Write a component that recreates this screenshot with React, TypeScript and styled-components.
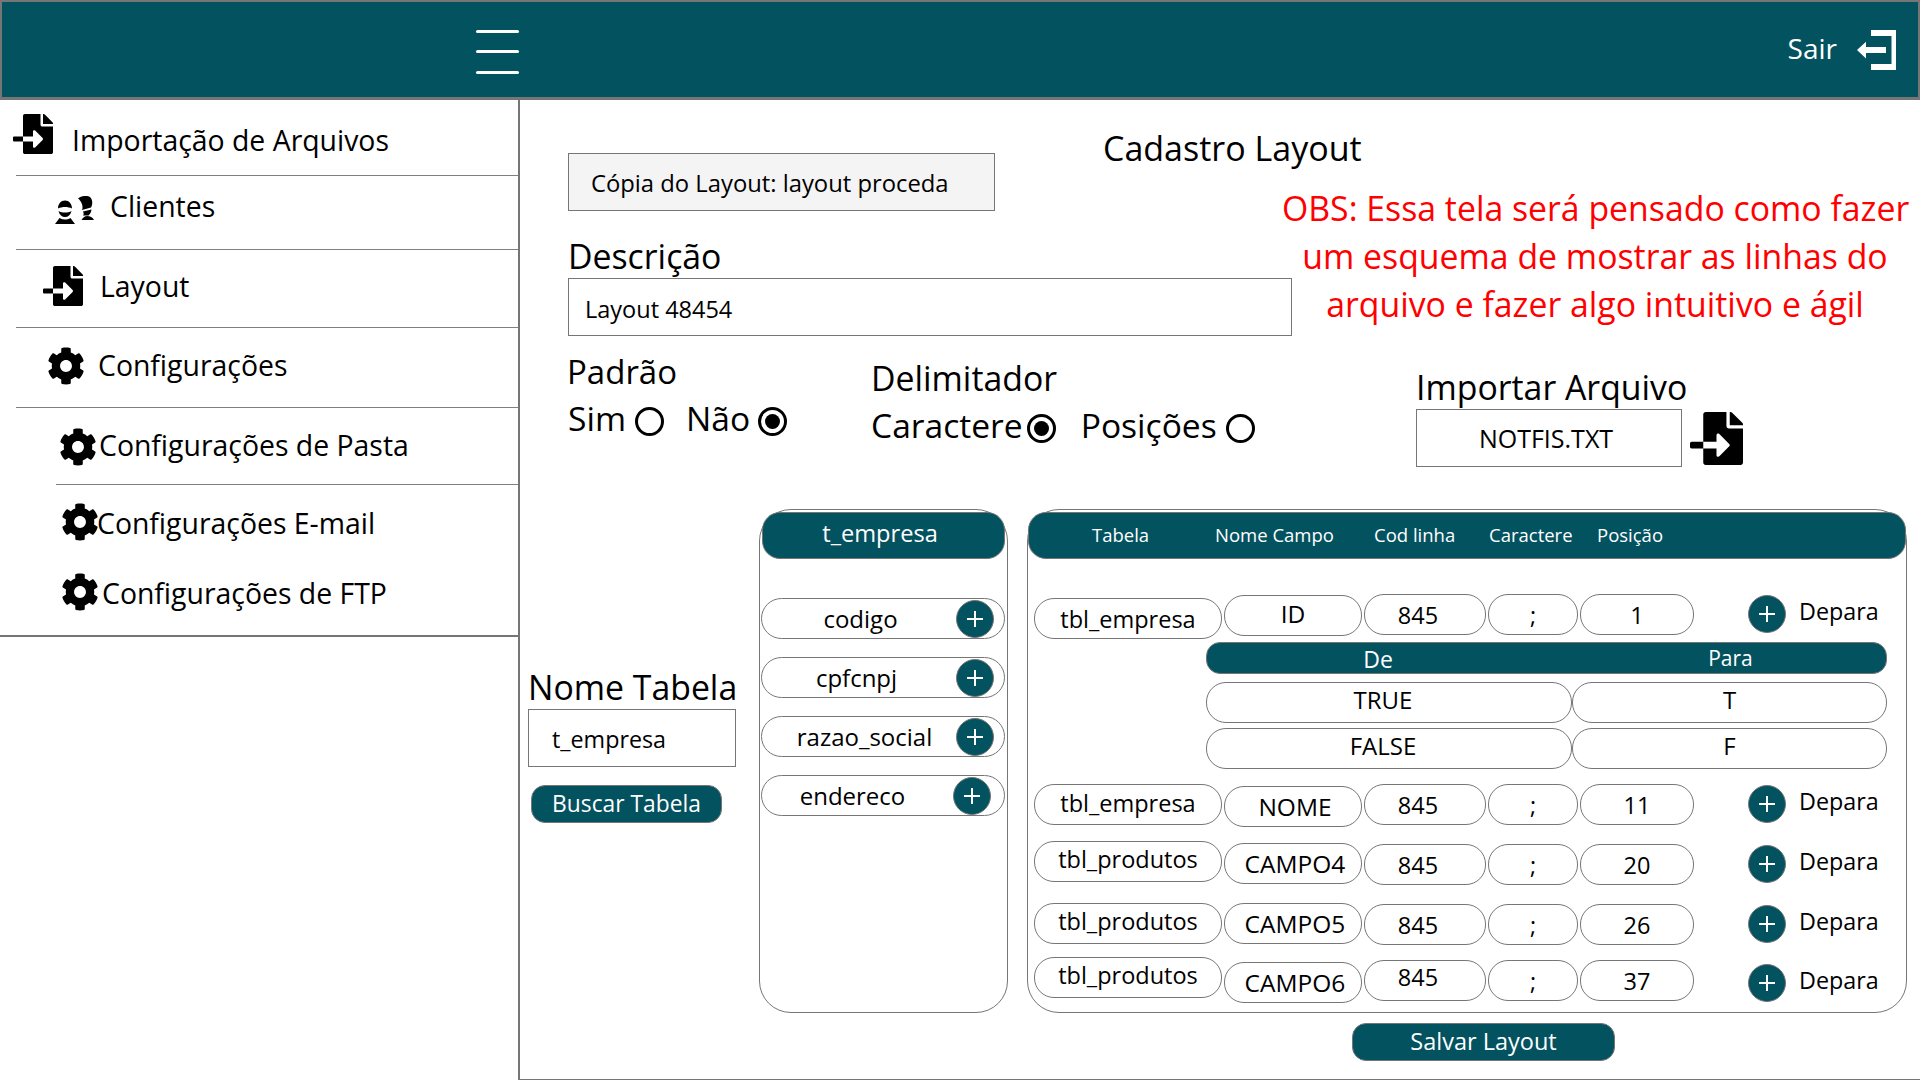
import React from 'react';
import styled, { createGlobalStyle } from 'styled-components';
import { FaFileImport, FaCog } from 'react-icons/fa';

const TEAL = '#03525f';
const LINE = '#767676';

const Global = createGlobalStyle`
  html, body { margin: 0; padding: 0; background: #fff; }
  body { font-family: "Open Sans", "Noto Sans", sans-serif; color: #000; }
`;

const Page = styled.div`
  width: 1920px; height: 1080px; display: flex; flex-direction: column; overflow: hidden;
`;
const Header = styled.header`
  height: 100px; box-sizing: border-box; flex: none; background: ${TEAL};
  border: 2px solid ${LINE}; border-bottom-width: 3px;
  display: flex; align-items: center; padding: 4px 22px 0 474px;
`;
const Burger = styled.div`
  width: 43px; height: 44px; display: flex; flex-direction: column; justify-content: space-between;
`;
const BurgerLine = styled.span`
  display: block; height: 3px; border-radius: 2px; background: #fff;
`;
const Exit = styled.div`
  margin-left: auto; display: flex; align-items: center; gap: 19px; color: #fff; font-size: 28px; margin-top: -4px;
`;
const ExitLabel = styled.span`
  margin-bottom: 3px;
`;
const Body = styled.div`
  flex: 1; display: flex; min-height: 0;
`;
const Sidebar = styled.nav`
  width: 518px; height: 537px; flex: none; box-sizing: border-box;
  border-bottom: 2px solid ${LINE}; display: flex; flex-direction: column;
`;
const NavItem = styled.div<{ $h: number; $pad: number; $gap: number; $lineLeft?: number }>`
  height: ${p => p.$h}px; box-sizing: border-box; display: flex; align-items: center;
  padding-left: ${p => p.$pad}px; gap: ${p => p.$gap}px; font-size: 28.4px;
  ${p => p.$lineLeft !== undefined ? `
    background: linear-gradient(#7f7f7f, #7f7f7f) no-repeat right bottom / calc(100% - ${p.$lineLeft}px) 1px;` : ''}
`;
const NavText = styled.span<{ $up?: number }>`
  margin-bottom: ${p => (p.$up ?? 0) * 2}px;
`;
const NavIcon = styled.span<{ $up?: number }>`
  display: flex; flex: none; margin-bottom: ${p => (p.$up ?? 0) * 2}px;
`;
const Main = styled.main`
  flex: 1; box-sizing: border-box; border-left: 2px solid ${LINE}; border-right: 1px solid ${LINE};
  border-bottom: 1px solid ${LINE}; padding: 0 13px 0 8px; display: flex; flex-direction: column;
`;
const TopRow = styled.div`
  display: flex; padding-left: 40px; height: 240px; flex: none;
`;
const LeftStack = styled.div`
  width: 724px; flex: none; display: flex; flex-direction: column;
`;
const TitleRow = styled.div`
  display: flex; align-items: flex-start; gap: 108px; height: 108px; padding-top: 26px; flex: none;
`;
const FlatBox = styled.div<{ $w?: number; $grey?: boolean; $pad?: number; $padR?: number; $padT?: number; $center?: boolean; $size?: number }>`
  width: ${p => p.$w ? `${p.$w}px` : '100%'}; height: 58px; box-sizing: border-box; flex: none;
  border: 1px solid ${LINE}; background: ${p => p.$grey ? '#f4f4f4' : '#fff'};
  display: flex; align-items: center; font-size: ${p => p.$size ?? 24}px;
  justify-content: ${p => p.$center ? 'center' : 'flex-start'};
  padding: ${p => p.$padT ?? 0}px ${p => p.$padR ?? 0}px 0 ${p => p.$pad ?? 0}px;
`;
const CopyBox = styled(FlatBox)`
  margin-top: 27px;
`;
const Title = styled.h1`
  margin: 0; font-weight: 400; font-size: 34px; line-height: 44px; white-space: nowrap;
`;
const Label = styled.div<{ $mt?: number; $size?: number }>`
  font-size: ${p => p.$size ?? 33.8}px; line-height: 44px; white-space: nowrap;
  margin-top: ${p => p.$mt ?? 0}px;
`;
const Obs = styled.div`
  margin-left: -10px; width: 626px; flex: none; padding-top: 84px; text-align: center; color: #ff0000;
  font-size: 33.8px; line-height: 48px; white-space: nowrap;
`;
const OptionRow = styled.div`
  display: flex; padding-left: 39px; height: 131px; flex: none;
`;
const Group = styled.div<{ $w: number; $mt: number }>`
  width: ${p => p.$w}px; flex: none; margin-top: ${p => p.$mt}px; display: flex; flex-direction: column;
`;
const Options = styled.div<{ $gap: number; $mt: number; $pl?: number }>`
  display: flex; align-items: center; gap: ${p => p.$gap}px; font-size: 33.6px; line-height: 44px;
  margin-top: ${p => p.$mt}px; padding-left: ${p => p.$pl ?? 0}px;
`;
const Option = styled.span<{ $gap: number }>`
  display: flex; align-items: center; gap: ${p => p.$gap}px; white-space: nowrap;
`;
const Radio = styled.span<{ $on?: boolean }>`
  width: 29px; height: 29px; border-radius: 50%; border: 3px solid #000; box-sizing: border-box; margin-top: 7px;
  display: inline-flex; align-items: center; justify-content: center; flex: none;
  &::after { content: ''; width: 15px; height: 15px; border-radius: 50%; background: ${p => p.$on ? '#000' : 'transparent'}; }
`;
const FileRow = styled.div`
  display: flex; align-items: center; gap: 8px;
`;
const BottomRow = styled.div`
  display: flex; margin-top: 38px; flex: none;
`;
const SearchCol = styled.div`
  width: 231px; flex: none; padding-top: 156px; display: flex; flex-direction: column; align-items: flex-start;
`;
const TealButton = styled.div<{ $w: number; $size?: number }>`
  width: ${p => p.$w}px; height: 38px; background: ${TEAL}; color: #fff; border: 1px solid ${LINE};
  box-sizing: border-box; border-radius: 14px; display: flex; align-items: center; justify-content: center;
  font-size: ${p => p.$size ?? 23.5}px; padding-bottom: 3px;
`;
const SearchButton = styled(TealButton)`
  margin: 18px 0 0 3px; padding-bottom: 1px;
`;
const SaveRow = styled.div`
  display: flex; padding-left: 824px; margin-top: 10px;
`;
const Panel = styled.section<{ $w: number; $mr?: number }>`
  width: ${p => p.$w}px; height: 504px; flex: none; box-sizing: border-box;
  border: 1px solid ${LINE}; border-radius: 32px; padding-top: 2px;
  margin-right: ${p => p.$mr ?? 0}px;
`;
const PanelHead = styled.div<{ $inset?: number }>`
  height: 47px; background: ${TEAL}; color: #fff; border: 1px solid ${LINE}; box-sizing: border-box;
  border-radius: 18px; margin: 0 ${p => p.$inset ?? 0}px; font-size: 23.6px;
  display: flex; align-items: center; justify-content: center; padding: 0 7px 5px 0;
`;
const Fields = styled.div`
  display: flex; flex-direction: column; padding: 39px 2px 0 1px; gap: 18px;
`;
const FieldPill = styled.div<{ $end: number }>`
  height: 41px; box-sizing: border-box; border: 1px solid ${LINE}; border-radius: 21px;
  display: flex; align-items: center; font-size: 24px; padding-right: ${p => p.$end}px;
`;
const FieldName = styled.span<{ $shift: number }>`
  flex: 1; text-align: center; padding-left: ${p => Math.max(p.$shift, 0)}px; padding-right: ${p => Math.max(-p.$shift, 0)}px;
`;
const Plus = styled.span`
  width: 38px; height: 38px; border-radius: 50%; background: ${TEAL}; color: #fff; flex: none; border: 1px solid ${LINE};
  box-sizing: border-box; display: inline-flex; align-items: center; justify-content: center;
`;
const TableHead = styled(PanelHead)`
  display: grid; grid-template-columns: 123px 159px 115px 108px auto; justify-content: start; padding: 0 0 3px 63px;
  font-size: 18.5px; margin: 0; white-space: nowrap;
`;
const TableBody = styled.div`
  display: flex; flex-direction: column; padding: 35px 0 0 6px;
`;
const Row = styled.div<{ $mt?: number }>`
  display: flex; align-items: flex-start; height: 48px; margin-top: ${p => p.$mt ?? 0}px;
`;
const Cell = styled.div<{ $w: number; $mt?: number; $up?: number; $right?: number; $left?: number; $size?: number }>`
  width: ${p => p.$w}px; height: 41px; flex: none; box-sizing: border-box; border: 1px solid ${LINE};
  border-radius: 20px; margin-top: ${p => p.$mt ?? 0}px; margin-right: 2px;
  display: flex; align-items: center; justify-content: center; font-size: ${p => p.$size ?? 23.5}px;
  padding-bottom: ${p => p.$up ?? 0}px; padding-right: ${p => p.$right ?? 0}px; padding-left: ${p => p.$left ?? 0}px;
`;
const DeparaPlus = styled(Plus)<{ $mt: number }>`
  margin: ${p => p.$mt}px 13px 0 52px;
`;
const DeparaText = styled.span<{ $mt: number }>`
  font-size: 23.3px; line-height: 32px; margin-top: ${p => p.$mt}px;
`;
const MapGrid = styled.div`
  margin-left: 172px; width: 681px; display: grid; grid-template-columns: 366px 315px; row-gap: 5px;
`;
const MapHead = styled.div`
  grid-column: 1 / -1; height: 32px; box-sizing: border-box; background: ${TEAL}; color: #fff; margin-bottom: 3px;
  border: 1px solid ${LINE}; border-radius: 14px; display: grid; grid-template-columns: 366px 315px;
  align-items: center; text-align: center; padding-bottom: 3px;
`;
const MapLabel = styled.span<{ $size: number; $right: number; $up: number }>`
  font-size: ${p => p.$size}px; padding-right: ${p => p.$right}px; margin-bottom: ${p => p.$up}px;
`;
const MapCell = styled.div<{ $right?: number }>`
  height: 41px; box-sizing: border-box; border: 1px solid ${LINE}; border-radius: 20px;
  display: flex; align-items: center; justify-content: center; font-size: 24px; padding-bottom: 6px;
  padding-right: ${p => p.$right ?? 0}px;
`;

const PlusIcon = () => (
  <svg width="18" height="18" viewBox="0 0 18 18" aria-hidden="true">
    <path d="M9 1v16M1 9h16" stroke="#fff" strokeWidth="2" />
  </svg>
);
const ExitIcon = () => (
  <svg width="40" height="40" viewBox="0 0 40 40" aria-hidden="true">
    <path d="M15 0H40V40H15V34H35.5V6H15Z" fill="#fff" />
    <path d="M1 20L10 11.7V17H30V23H10V28.5Z" fill="#fff" />
  </svg>
);
const ClientsIcon = () => (
  <svg width="40" height="28" viewBox="10 9 40 28" aria-hidden="true">
    <path d="M13 21.5C13 17 16 13.5 20 13.5C24 13.5 27 17 27 21.5C23 19.5 17 19.5 13 21.5Z" />
    <path d="M13.5 24C17 26 23 26 26.5 24C25.5 28 23 30 20 30C17 30 14.5 28 13.5 24Z" />
    <path d="M10 37L14.5 31C18 33 22 33 25.5 31L30 37Z" />
    <path d="M33 11.5C37 8.5 43 8 45.5 10.5C48 13.5 47.5 18 46 20.5L37 23C38 20.5 37.5 18 36.5 16C35.5 14 34.5 12.5 33 11.5Z" />
    <path d="M38 24.5L46.5 22.5C46.3 25 45 27 43.5 28.5L38 28.5C39 27.5 38.8 26 38 24.5Z" />
    <path d="M36.5 33C38 30.5 40 29 42 29C45 29 47.8 30.5 49 33Z" />
  </svg>
);

const Gear = styled(FaCog)`
  width: 38px; height: 38px; flex: none; margin: 0 -2px;
`;
const FileIcon = styled(FaFileImport)<{ $s: number }>`
  width: ${p => p.$s}px; height: ${p => p.$s}px; flex: none;
`;

type R = { t: string; c: string; p: string; mt: number; o: number[]; u?: number[]; l?: number };
const rows: R[] = [
  { t: 'tbl_empresa', c: 'ID', p: '1', mt: 0, o: [4, 1, 0, 1], u: [0, 5, 0] },
  { t: 'tbl_empresa', c: 'NOME', p: '11', mt: 15, o: [0, 2, 0, 1], u: [3, 0, 0], l: 4 },
  { t: 'tbl_produtos', c: 'CAMPO4', p: '20', mt: 9, o: [0, 2, 3, 4], u: [5, 0, 0], l: 4 },
  { t: 'tbl_produtos', c: 'CAMPO5', p: '26', mt: 14, o: [0, 0, 1, 2], u: [5, 0, 0], l: 4 },
  { t: 'tbl_produtos', c: 'CAMPO6', p: '37', mt: 6, o: [0, 5, 3, 7], u: [5, 0, 8], l: 4 },
];
const fields = [
  { n: 'codigo', s: 3, e: 10 },
  { n: 'cpfcnpj', s: -5, e: 10 },
  { n: 'razao_social', s: 11, e: 10 },
  { n: 'endereco', s: -10, e: 13 },
];

const TableRow = ({ r }: { r: R }) => (
  <Row $mt={r.mt}>
    <Cell $w={188} $mt={r.o[0]} $up={r.u?.[0]}>{r.t}</Cell>
    <Cell $w={138} $mt={r.o[1]} $up={r.u?.[1]} $size={24.5} $left={r.l}>{r.c}</Cell>
    <Cell $w={122} $mt={r.o[2]} $up={r.u?.[2]} $right={14}>845</Cell>
    <Cell $w={90} $mt={r.o[2]}>;</Cell>
    <Cell $w={114} $mt={r.o[2]}>{r.p}</Cell>
    <DeparaPlus $mt={r.o[3]}><PlusIcon /></DeparaPlus>
    <DeparaText $mt={r.o[3]}>Depara</DeparaText>
  </Row>
);

const Nav = ({ h, pad, gap, line, icon, text, iconUp, textUp }: {
  h: number; pad: number; gap: number; line?: number; icon: React.ReactNode; text: string; iconUp: number; textUp: number;
}) => (
  <NavItem $h={h} $pad={pad} $gap={gap} $lineLeft={line}>
    <NavIcon $up={iconUp}>{icon}</NavIcon>
    <NavText $up={textUp}>{text}</NavText>
  </NavItem>
);

export default function App() {
  return (
    <Page>
      <Global />
      <Header>
        <Burger><BurgerLine /><BurgerLine /><BurgerLine /></Burger>
        <Exit><ExitLabel>Sair</ExitLabel><ExitIcon /></Exit>
      </Header>
      <Body>
        <Sidebar>
          <Nav h={76} pad={13} gap={19} line={16} icon={<FileIcon $s={40} />} text="Importação de Arquivos" iconUp={4} textUp={-2} />
          <Nav h={74} pad={55} gap={15} line={16} icon={<ClientsIcon />} text="Clientes" iconUp={3} textUp={7} />
          <Nav h={78} pad={43} gap={17} line={16} icon={<FileIcon $s={40} />} text="Layout" iconUp={3} textUp={3} />
          <Nav h={80} pad={49} gap={15} line={16} icon={<Gear />} text="Configurações" iconUp={2} textUp={3} />
          <Nav h={77} pad={61} gap={4} line={56} icon={<Gear />} text="Configurações de Pasta" iconUp={0} textUp={2} />
          <Nav h={76} pad={63} gap={0} icon={<Gear />} text="Configurações E-mail" iconUp={1} textUp={0} />
          <Nav h={74} pad={63} gap={5} icon={<Gear />} text="Configurações de FTP" iconUp={6} textUp={5} />
        </Sidebar>
        <Main>
          <TopRow>
            <LeftStack>
              <TitleRow>
                <CopyBox $w={427} $grey $pad={22} $padT={2} $size={23.8}>Cópia do Layout: layout proceda</CopyBox>
                <Title>Cadastro Layout</Title>
              </TitleRow>
              <Label>Descrição</Label>
              <FlatBox $pad={16} $padT={3} $size={23.5}>Layout 48454</FlatBox>
            </LeftStack>
            <Obs>
              OBS: Essa tela será pensado como fazer<br />
              um esquema de mostrar as linhas do<br />
              arquivo e fazer algo intuitivo e ágil
            </Obs>
          </TopRow>
          <OptionRow>
            <Group $w={304} $mt={10}>
              <Label $size={33}>Padrão</Label>
              <Options $gap={22} $mt={2} $pl={1}>
                <Option $gap={9}>Sim<Radio /></Option>
                <Option $gap={8}>Não<Radio $on /></Option>
              </Options>
            </Group>
            <Group $w={545} $mt={16}>
              <Label>Delimitador</Label>
              <Options $gap={25} $mt={3}>
                <Option $gap={4}>Caractere<Radio $on /></Option>
                <Option $gap={9}>Posições<Radio /></Option>
              </Options>
            </Group>
            <Group $w={340} $mt={25}>
              <Label>Importar Arquivo</Label>
              <FileRow>
                <FlatBox $w={266} $center $padR={6} $size={25}>NOTFIS.TXT</FlatBox>
                <FileIcon $s={53} />
              </FileRow>
            </Group>
          </OptionRow>
          <BottomRow>
            <SearchCol>
              <Label>Nome Tabela</Label>
              <FlatBox $w={208} $pad={23} $padT={2} $size={23.3}>t_empresa</FlatBox>
              <SearchButton $w={191} $size={22.8}>Buscar Tabela</SearchButton>
            </SearchCol>
            <Panel $w={249} $mr={19}>
              <PanelHead $inset={2}>t_empresa</PanelHead>
              <Fields>
                {fields.map(f => (
                  <FieldPill key={f.n} $end={f.e}><FieldName $shift={f.s}>{f.n}</FieldName><Plus><PlusIcon /></Plus></FieldPill>
                ))}
              </Fields>
            </Panel>
            <Panel $w={880}>
              <TableHead>
                <span>Tabela</span>
                <span>Nome Campo</span>
                <span>Cod linha</span>
                <span>Caractere</span>
                <span>Posição</span>
              </TableHead>
              <TableBody>
                <TableRow r={rows[0]} />
                <MapGrid>
                  <MapHead>
                    <MapLabel $size={23} $right={24} $up={2}>De</MapLabel>
                    <MapLabel $size={21} $right={0} $up={5}>Para</MapLabel>
                  </MapHead>
                  <MapCell $right={12}>TRUE</MapCell><MapCell>T</MapCell>
                  <MapCell $right={12}>FALSE</MapCell><MapCell>F</MapCell>
                </MapGrid>
                <TableRow r={rows[1]} />
                <TableRow r={rows[2]} />
                <TableRow r={rows[3]} />
                <TableRow r={rows[4]} />
              </TableBody>
            </Panel>
          </BottomRow>
          <SaveRow><TealButton $w={263} $size={23.5}>Salvar Layout</TealButton></SaveRow>
        </Main>
      </Body>
    </Page>
  );
}
